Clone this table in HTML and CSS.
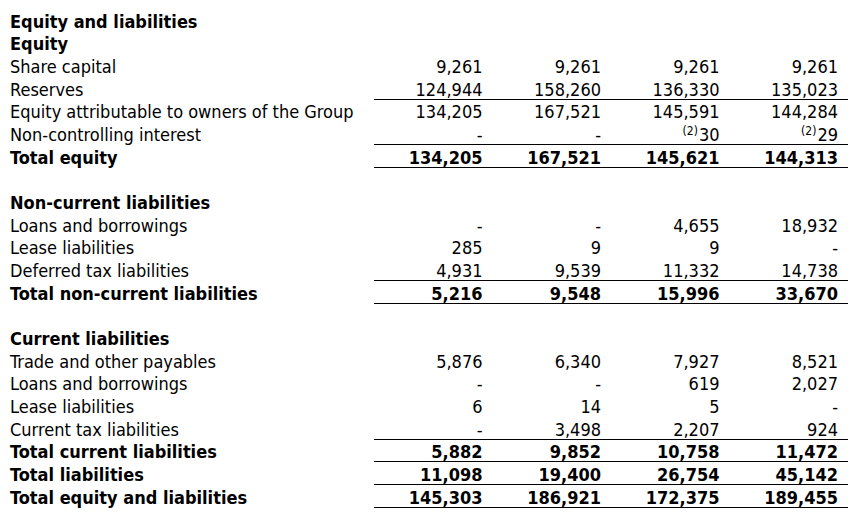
FILE: index.html
```html
<!DOCTYPE html>
<html lang="en">
<head>
<meta charset="utf-8">
<title>Equity and liabilities</title>
<link rel="stylesheet" href="styles.css">
</head>
<body>
<div class="sheet">
  <div class="label bold">Equity and liabilities</div><div class="v"></div><div class="v"></div><div class="v"></div><div class="v"></div>
  <div class="label bold">Equity</div><div class="v"></div><div class="v"></div><div class="v"></div><div class="v"></div>
  <div class="label">Share capital</div><div class="v">9,261</div><div class="v">9,261</div><div class="v">9,261</div><div class="v">9,261</div>
  <div class="label">Reserves</div><div class="v rule">124,944</div><div class="v rule">158,260</div><div class="v rule">136,330</div><div class="v rule">135,023</div>
  <div class="label">Equity attributable to owners of the Group</div><div class="v">134,205</div><div class="v">167,521</div><div class="v">145,591</div><div class="v">144,284</div>
  <div class="label">Non-controlling interest</div><div class="v rule">-</div><div class="v rule">-</div><div class="v rule"><sup>(2)</sup>30</div><div class="v rule"><sup>(2)</sup>29</div>
  <div class="label bold">Total equity</div><div class="v bold rule">134,205</div><div class="v bold rule">167,521</div><div class="v bold rule">145,621</div><div class="v bold rule">144,313</div>
  <div class="gap"></div>
  <div class="label bold">Non-current liabilities</div><div class="v"></div><div class="v"></div><div class="v"></div><div class="v"></div>
  <div class="label">Loans and borrowings</div><div class="v">-</div><div class="v">-</div><div class="v">4,655</div><div class="v">18,932</div>
  <div class="label">Lease liabilities</div><div class="v">285</div><div class="v">9</div><div class="v">9</div><div class="v">-</div>
  <div class="label">Deferred tax liabilities</div><div class="v rule">4,931</div><div class="v rule">9,539</div><div class="v rule">11,332</div><div class="v rule">14,738</div>
  <div class="label bold">Total non-current liabilities</div><div class="v bold rule">5,216</div><div class="v bold rule">9,548</div><div class="v bold rule">15,996</div><div class="v bold rule">33,670</div>
  <div class="gap"></div>
  <div class="label bold">Current liabilities</div><div class="v"></div><div class="v"></div><div class="v"></div><div class="v"></div>
  <div class="label">Trade and other payables</div><div class="v">5,876</div><div class="v">6,340</div><div class="v">7,927</div><div class="v">8,521</div>
  <div class="label">Loans and borrowings</div><div class="v">-</div><div class="v">-</div><div class="v">619</div><div class="v">2,027</div>
  <div class="label">Lease liabilities</div><div class="v">6</div><div class="v">14</div><div class="v">5</div><div class="v">-</div>
  <div class="label">Current tax liabilities</div><div class="v rule">-</div><div class="v rule">3,498</div><div class="v rule">2,207</div><div class="v rule">924</div>
  <div class="label bold">Total current liabilities</div><div class="v bold rule">5,882</div><div class="v bold rule">9,852</div><div class="v bold rule">10,758</div><div class="v bold rule">11,472</div>
  <div class="label bold">Total liabilities</div><div class="v bold rule">11,098</div><div class="v bold rule">19,400</div><div class="v bold rule">26,754</div><div class="v bold rule">45,142</div>
  <div class="label bold">Total equity and liabilities</div><div class="v bold thick">145,303</div><div class="v bold thick">186,921</div><div class="v bold thick">172,375</div><div class="v bold thick">189,455</div>
</div>
</body>
</html>
```
FILE: styles.css
```css
html, body {
  margin: 0;
  padding: 0;
  background: #ffffff;
}
body {
  font-family: "DejaVu Sans Condensed", "DejaVu Sans", sans-serif;
  font-stretch: condensed;
  font-size: 18px;
  color: #000000;
}
.sheet {
  display: grid;
  grid-template-columns: 364px repeat(4, 118.5px);
  grid-auto-rows: 22.68px;
  padding: 9px 0 0 10px;
}
.label, .v {
  line-height: 22.68px;
  padding-top: 1.5px;
  white-space: nowrap;
  box-sizing: border-box;
}
.v {
  text-align: right;
  padding-right: 10px;
}
.bold {
  font-weight: bold;
}
.rule {
  border-bottom: 1px solid #000;
}
.thick {
  border-bottom: 3px solid #000;
  margin-bottom: -2px;
}
.gap {
  grid-column: 1 / -1;
}
sup {
  font-size: 12px;
  line-height: 0;
  vertical-align: 6px;
  margin-right: 1px;
}
```
